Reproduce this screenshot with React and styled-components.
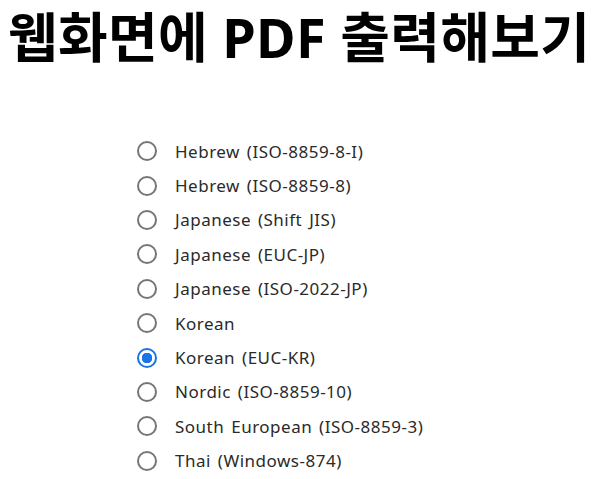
import React from 'react'
import styled, { createGlobalStyle } from 'styled-components'

const GlobalStyle = createGlobalStyle`
  body {
    margin: 0;
    background: #fff;
    font-family: "Noto Sans CJK KR", "Noto Sans", sans-serif;
  }
`

const Page = styled.div`
  padding: 0 0 0 8px;
`

const Title = styled.h1`
  width: max-content;
  margin: 0;
  font-family: "Noto Sans", "Noto Sans CJK KR", sans-serif;
  font-size: 54px;
  font-weight: 700;
  line-height: 74px;
  letter-spacing: 0.3px;
  color: #000;
  white-space: nowrap;
`

const List = styled.div`
  display: flex;
  flex-direction: column;
  padding: 60px 0 0 129px;
`

const Row = styled.label`
  display: flex;
  align-items: center;
  gap: 18px;
  height: 34.4px;
  font-family: "Noto Sans", sans-serif;
  font-size: 17px;
  letter-spacing: 0.5px;
  word-spacing: 2px;
  color: #2a2a2a;
`

const Radio = styled.input.attrs({ type: 'radio', name: 'charset' })`
  appearance: none;
  margin: 0;
  width: 20px;
  height: 20px;
  border-radius: 50%;
  border: 2px solid #767676;
  box-sizing: border-box;
  background: #fff;
  &:checked {
    border-color: #1a73e8;
    background: radial-gradient(circle, #1a73e8 0 5px, #fff 5.5px);
  }
`

const charsets = [
  'Hebrew (ISO-8859-8-I)',
  'Hebrew (ISO-8859-8)',
  'Japanese (Shift JIS)',
  'Japanese (EUC-JP)',
  'Japanese (ISO-2022-JP)',
  'Korean',
  'Korean (EUC-KR)',
  'Nordic (ISO-8859-10)',
  'South European (ISO-8859-3)',
  'Thai (Windows-874)',
]

const App = () => (
  <Page>
    <GlobalStyle />
    <Title>웹화면에 PDF 출력해보기</Title>
    <List>
      {charsets.map(c => (
        <Row key={c}>
          <Radio defaultChecked={c === 'Korean (EUC-KR)'} />
          {c}
        </Row>
      ))}
    </List>
  </Page>
)

export default App
